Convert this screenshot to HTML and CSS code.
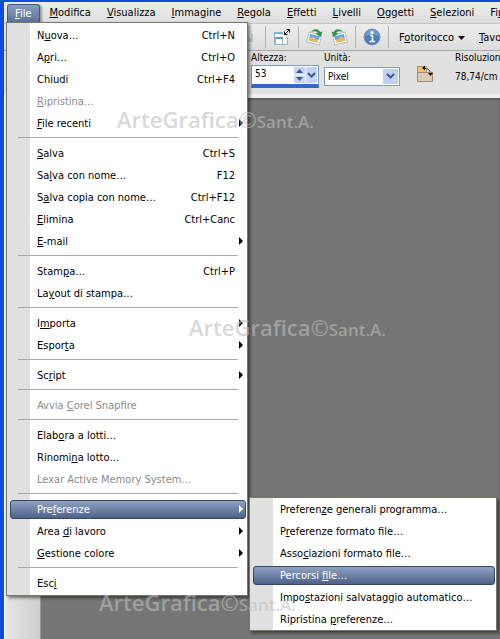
FILE: index.html
```html
<!DOCTYPE html>
<html lang="it">

<head>
    <meta charset="UTF-8">
    <title>Menu File - Preferenze</title>
    <link rel="stylesheet" href="styles.css">
</head>

<body>
    <div class="window">
        <nav class="menubar">
            <div class="menubar-entry">
                <button type="button" class="menubar-item open"><u>F</u>ile</button>

                <div class="menu menu-file">
                    <button type="button" class="item"><span>N<u>u</u>ova…</span><span>Ctrl+N</span></button>
                    <button type="button" class="item"><span>A<u>p</u>ri…</span><span>Ctrl+O</span></button>
                    <button type="button" class="item"><span>Chiudi</span><span>Ctrl+F4</span></button>
                    <button type="button" class="item" disabled><span><u>R</u>ipristina…</span></button>
                    <button type="button" class="item sub"><span><u>F</u>ile recenti</span></button>
                    <hr>
                    <button type="button" class="item"><span><u>S</u>alva</span><span>Ctrl+S</span></button>
                    <button type="button" class="item"><span>Sa<u>l</u>va con nome…</span><span>F12</span></button>
                    <button type="button" class="item"><span>S<u>a</u>lva copia con nome…</span><span>Ctrl+F12</span></button>
                    <button type="button" class="item"><span><u>E</u>limina</span><span>Ctrl+Canc</span></button>
                    <button type="button" class="item sub"><span><u>E</u>-mail</span></button>
                    <hr>
                    <button type="button" class="item"><span>Stam<u>p</u>a…</span><span>Ctrl+P</span></button>
                    <button type="button" class="item"><span>La<u>y</u>out di stampa…</span></button>
                    <hr>
                    <button type="button" class="item sub"><span>I<u>m</u>porta</span></button>
                    <button type="button" class="item sub"><span>Espor<u>t</u>a</span></button>
                    <hr>
                    <button type="button" class="item sub"><span>Sc<u>r</u>ipt</span></button>
                    <hr>
                    <button type="button" class="item" disabled><span>Avvia <u>C</u>orel Snapfire</span></button>
                    <hr>
                    <button type="button" class="item"><span>Elab<u>o</u>ra a lotti…</span></button>
                    <button type="button" class="item"><span>Rinomi<u>n</u>a lotto…</span></button>
                    <button type="button" class="item" disabled><span>Lexar Active Memory System…</span></button>
                    <hr>
                    <div class="submenu-entry">
                        <button type="button" class="item sub selected"><span>Pre<u>f</u>erenze</span></button>
                        <div class="menu menu-preferenze">
                            <button type="button" class="item"><span>Preferen<u>z</u>e generali programma…</span></button>
                            <button type="button" class="item"><span>P<u>r</u>eferenze formato file…</span></button>
                            <button type="button" class="item"><span>Asso<u>c</u>iazioni formato file…</span></button>
                            <button type="button" class="item selected"><span>Percorsi <u>f</u>ile…</span></button>
                            <button type="button" class="item"><span>Impo<u>s</u>tazioni salvataggio automatico…</span></button>
                            <button type="button" class="item"><span>Ripristina <u>p</u>referenze…</span></button>
                        </div>
                    </div>
                    <button type="button" class="item sub"><span>Area <u>d</u>i lavoro</span></button>
                    <button type="button" class="item sub"><span><u>G</u>estione colore</span></button>
                    <hr>
                    <button type="button" class="item"><span>Esc<u>i</u></span></button>
                </div>
            </div>
            <button type="button" class="menubar-item"><u>M</u>odifica</button>
            <button type="button" class="menubar-item"><u>V</u>isualizza</button>
            <button type="button" class="menubar-item"><u>I</u>mmagine</button>
            <button type="button" class="menubar-item"><u>R</u>egola</button>
            <button type="button" class="menubar-item"><u>E</u>ffetti</button>
            <button type="button" class="menubar-item"><u>L</u>ivelli</button>
            <button type="button" class="menubar-item"><u>O</u>ggetti</button>
            <button type="button" class="menubar-item"><u>S</u>elezioni</button>
            <button type="button" class="menubar-item">Fi<u>n</u>estra</button>
        </nav>

        <div class="toolbar">
            <button type="button" class="tool" aria-label="Ripeti" disabled>
                <svg width="18" height="18" viewBox="0 0 18 18"><path d="M3 5 L11 12 M12 6 V13 H5" fill="none" stroke="#b4d0c4" stroke-width="2"/></svg>
            </button>
            <span class="divider"></span>
            <button type="button" class="tool" aria-label="Ridimensiona">
                <svg width="18" height="18" viewBox="0 0 18 18">
                    <path d="M1.500 4.500 H10 M14.500 9 V16.500 H1.500 V4.500" fill="#f4f8fa" stroke="#9db4c0"/>
                    <rect x="1" y="4" width="9" height="2" fill="#7db6cf"/>
                    <rect x="2.500" y="9.500" width="7" height="7" fill="#fff" stroke="#8fb3c6"/>
                    <rect x="2" y="9" width="8" height="2" fill="#5d9cbb"/>
                    <path d="M11.500 6.500 L16.500 1.500 M13.500 1.500 H16.500 V4.500 M11.500 3.500 V6.500 H14.500" fill="none" stroke="#111"/>
                </svg>
            </button>
            <span class="divider"></span>
            <button type="button" class="tool" aria-label="Ruota a destra">
                <svg width="18" height="18" viewBox="0 0 18 18">
                    <g transform="rotate(14 8 11)">
                        <rect x="1.500" y="5.500" width="13" height="10" fill="#fff" stroke="#b5bcc2"/>
                        <rect x="3" y="7" width="10" height="4" fill="#5fa8e0"/>
                        <path d="M3 14 V11 L7 9 L13 12 V14 Z" fill="#e9b765"/>
                    </g>
                    <path d="M5 4 C8 0 13 1 14 4 L16.500 3.500 L14.500 9 L9.500 5.500 L12 5 C10 3 8 3 5 4 Z" fill="#35924a"/>
                </svg>
            </button>
            <button type="button" class="tool" aria-label="Ruota a sinistra">
                <svg width="18" height="18" viewBox="0 0 18 18">
                    <g transform="rotate(-14 10 11)">
                        <rect x="3.500" y="5.500" width="13" height="10" fill="#fff" stroke="#b5bcc2"/>
                        <rect x="5" y="7" width="10" height="4" fill="#5fa8e0"/>
                        <path d="M5 14 V12 L11 9 L15 11 V14 Z" fill="#e9b765"/>
                    </g>
                    <path d="M13 4 C10 0 5 1 4 4 L1.500 3.500 L3.500 9 L8.500 5.500 L6 5 C8 3 10 3 13 4 Z" fill="#35924a"/>
                </svg>
            </button>
            <span class="divider"></span>
            <button type="button" class="tool" aria-label="Informazioni">
                <svg width="18" height="18" viewBox="0 0 18 18">
                    <circle cx="9" cy="9" r="8" fill="#4a7dbb" stroke="#7d93b3"/>
                    <path d="M2 8 A7 7 0 0 1 16 8 Q9 5 2 8 Z" fill="#6f9acb"/>
                    <circle cx="9" cy="4.500" r="1.500" fill="#fff"/>
                    <path d="M7 7.500 H9.500 V13 M6.500 13.500 H12" fill="none" stroke="#fff" stroke-width="1.600"/>
                </svg>
            </button>
            <span class="divider"></span>
            <button type="button" class="tool-text"><span>F<u>o</u>toritocco</span>
                <svg width="7" height="4" viewBox="0 0 7 4"><path d="M0 0 H7 L3.500 4 Z" fill="#000"/></svg>
            </button>
            <button type="button" class="tool-text"><span><u>T</u>avolozze</span></button>
        </div>

        <div class="options">
            <div class="field">
                <label for="altezza">Altezza:</label>
                <div class="spinner">
                    <input id="altezza" type="text" value="53">
                    <svg class="arrows" width="11" height="16" viewBox="0 0 11 16"><rect width="11" height="16" rx="1" fill="#c4d4f8"/><path d="M0 8 H11" stroke="#fff"/><path d="M2 6 L5.500 2 L9 6 Z M2 10 L5.500 14 L9 10 Z" fill="#43577d"/></svg>
                    <svg class="arrows" width="11" height="16" viewBox="0 0 11 16"><rect width="11" height="16" rx="1" fill="#c4d4f8"/><path d="M2 6 L5.500 9.500 L9 6" fill="none" stroke="#43577d" stroke-width="2"/></svg>
                </div>
            </div>
            <div class="field">
                <label for="unita">Unità:</label>
                <div class="combo">
                    <select id="unita">
                        <option>Pixel</option>
                    </select>
                    <svg class="combo-arrow" width="15" height="15" viewBox="0 0 15 15"><rect width="15" height="15" rx="1" fill="#bfd0f7"/><path d="M4 5 L7.500 8.500 L11 5" fill="none" stroke="#43577d" stroke-width="2"/></svg>
                </div>
            </div>
            <button type="button" class="tool rotate" aria-label="Scambia dimensioni">
                <svg width="18" height="18" viewBox="0 0 18 18">
                    <rect x="1.500" y="1.500" width="9" height="15" fill="#f6c069" stroke="#b5966c"/>
                    <rect x="1.500" y="7.500" width="15" height="9" fill="#dccbb2" stroke="#a08d76"/>
                    <path d="M8 3.500 C12 3 14 5 14.500 8" fill="none" stroke="#222" stroke-dasharray="2 1"/>
                    <path d="M6 3 L9 0.500 V5.500 Z M12 8 H17 L14.500 11 Z" fill="#111"/>
                </svg>
            </button>
            <div class="field">
                <span>Risoluzione:</span>
                <span class="value">78,74/cm</span>
            </div>
        </div>

        <main class="workspace">
            <div class="palette"></div>
        </main>
    </div>

    <div class="mark mark-top">ArteGrafica©<small>Sant.A.</small></div>
    <div class="mark mark-middle">ArteGrafica©<small>Sant.A.</small></div>
    <div class="mark mark-bottom">ArteGrafica©<small>Sant.A.</small></div>
</body>

</html>
```
FILE: styles.css
```css
* {
    box-sizing: border-box;
}
body {
    margin: 0;
    position: relative;
    overflow: hidden;
    font-family: "DejaVu Sans Condensed", "DejaVu Sans", sans-serif;
    font-stretch: condensed;
    font-size: 11px;
    line-height: 14px;
    color: #000;
}
button, input, select {
    font: inherit;
    color: inherit;
    margin: 0;
    padding: 0;
    border: 0;
    background: none;
}
u {
    text-underline-offset: 1px;
    text-decoration-thickness: 1px;
}
.window {
    display: flex;
    flex-direction: column;
    min-height: 100vh;
    border-top: 2px solid #0a4fe0;
    border-left: 4px solid #0a4be0;
    background: #e1e1e1;
}

/* menu bar */
.menubar {
    display: flex;
    height: 21px;
    padding: 2px 0 0 3px;
    background: linear-gradient(#ececec, #dedede);
}
.menubar-entry {
    position: relative;
    margin-right: 2px;
}
.menubar-item {
    flex: none;
    height: 18px;
    padding: 0 8px;
    white-space: nowrap;
}
.menubar-item.open {
    padding: 0 7px;
    color: #fff;
    border: 1px solid #46597a;
    border-bottom: 0;
    border-radius: 3px 3px 0 0;
    background: linear-gradient(#8a9dbf, #5d7398);
    box-shadow: 2px 1px 2px #999;
}

/* drop-down menus */
.menu {
    position: absolute;
    z-index: 2;
    border: 1px solid #77776a;
    background: linear-gradient(90deg, #e1e1e1 23px, #fff 23px);
    box-shadow: 2px 2px 3px rgba(0, 0, 0, 0.5);
}
.menu-file {
    top: 18px;
    left: -1px;
    width: 242px;
    padding: 1px 0;
}
.menu-preferenze {
    top: -1px;
    left: 242px;
    width: 248px;
}
.submenu-entry {
    display: flex;
    position: relative;
}
.item {
    display: flex;
    justify-content: space-between;
    align-items: center;
    position: relative;
    width: 100%;
    height: 22px;
    padding: 2px 12px 0 30px;
    text-align: left;
    white-space: nowrap;
}
.item:disabled {
    color: #8a8a8a;
}
.item.sub::after {
    content: "";
    position: absolute;
    right: 4px;
    top: 7px;
    border: 4px solid transparent;
    border-left-color: currentColor;
    border-right: 0;
}
.item.selected {
    width: calc(100% - 4px);
    height: 19px;
    margin: 2px 1px 1px 3px;
    padding: 0 0 0 26px;
    color: #fff;
    border: 1px solid #34476a;
    border-radius: 3px;
    background: linear-gradient(#8fa2c2, #4d6287);
}
.item.selected.sub::after {
    right: 2px;
    top: 4px;
}
hr {
    height: 1px;
    margin: 3px 9px 4px 11px;
    border: 0;
    background: #a9a9a9;
}

/* toolbar */
.toolbar {
    display: flex;
    align-items: center;
    height: 28px;
    padding-left: 233px;
    border-top: 1px solid #c4c4c4;
    border-bottom: 1px solid #a8a8a8;
    background: linear-gradient(#ededed, #dcdcdc);
    overflow: hidden;
}
.tool {
    flex: none;
    width: 24px;
    height: 18px;
    line-height: 0;
}
.divider {
    flex: none;
    width: 1px;
    height: 22px;
    margin: 0 4px;
    background: #b2b2b2;
}
.tool-text {
    display: flex;
    flex: none;
    align-items: center;
    gap: 4px;
    padding: 2px 8px 0 6px;
    white-space: nowrap;
}

/* tool options */
.options {
    display: flex;
    height: 47px;
    padding: 0 0 0 247px;
    font-size: 10px;
    background: #e1e1e1;
    border-bottom: 4px solid #efefef;
    overflow: hidden;
}
.field {
    flex: none;
    margin-right: 5px;
    white-space: nowrap;
}
.field label, .field span {
    display: block;
}
.field .value {
    margin-top: 5px;
}
.spinner {
    display: flex;
    gap: 1px;
    width: 68px;
    height: 23px;
    padding: 1px;
    border: 1px solid #7f9db9;
    border-bottom: 4px solid #316ac5;
    background: #fff;
}
.spinner input {
    flex: 1;
    min-width: 0;
    height: 14px;
    padding-left: 2px;
}
.combo {
    position: relative;
    width: 76px;
    height: 19px;
    margin-top: 2px;
    border: 1px solid #7f9db9;
    background: #fff;
}
.combo select {
    width: 100%;
    height: 17px;
    padding-left: 3px;
    appearance: none;
}
.combo-arrow {
    position: absolute;
    top: 1px;
    right: 1px;
    pointer-events: none;
}
.rotate {
    margin: 14px 18px 0 8px;
}

/* work area */
.workspace {
    flex: 1;
    display: flex;
    background: #757575;
    box-shadow: inset 0 2px 2px #5c5c5c;
}
.palette {
    width: 37px;
    border-left: 1px solid #fff;
    border-right: 1px solid #999;
    background: linear-gradient(90deg, #e6e6e6, #cfcfcf);
}

/* watermark */
.mark {
    position: absolute;
    z-index: 3;
    font-family: "Open Sans", sans-serif;
    font-stretch: normal;
    font-size: 22px;
    font-weight: 600;
    line-height: 24px;
    color: rgba(190, 190, 190, 0.6);
    white-space: nowrap;
    pointer-events: none;
}
.mark small {
    font-size: 17px;
}
.mark-top {
    top: 107px;
    left: 117px;
}
.mark-middle {
    top: 315px;
    left: 189px;
}
.mark-bottom {
    top: 590px;
    left: 99px;
}
```
